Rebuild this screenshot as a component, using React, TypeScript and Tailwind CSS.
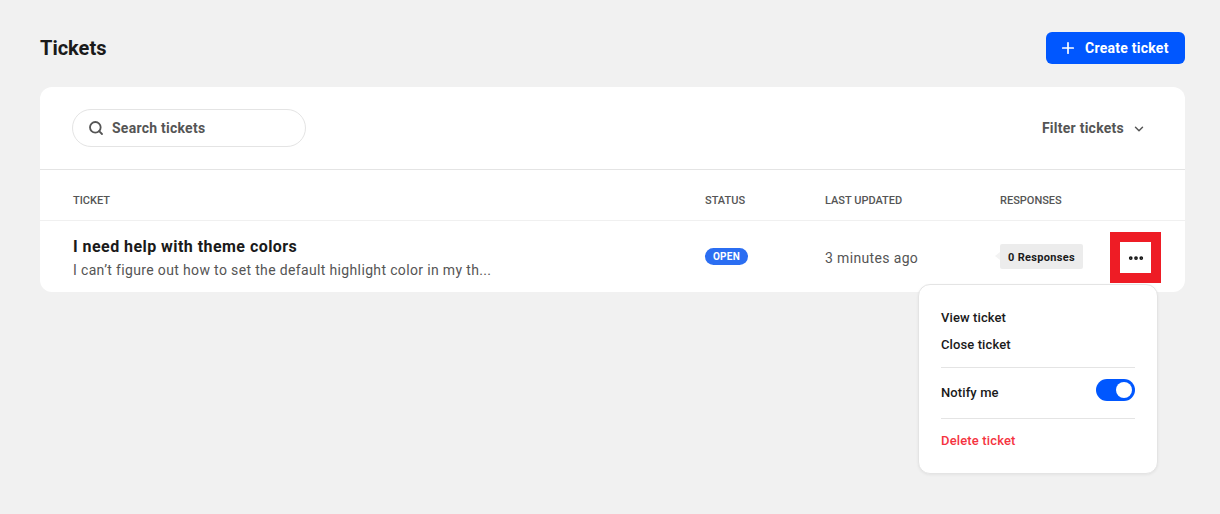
import { ChevronDown, Ellipsis, Plus, Search } from "lucide-react";

const columns = "grid grid-cols-[632px_120px_175px_110px_1fr] pl-[33px]";

function RowMenu() {
  return (
    <div className="absolute left-[878px] top-[197px] w-[240px] h-[190px] rounded-[12px] border border-[#e4e4e4] bg-white px-[22px] pt-[24px] shadow-[0_1px_3px_rgba(0,0,0,0.06)] text-[13px] font-medium tracking-[0.1px] text-[#1a1a1a]">
      <div className="h-[18px] leading-[18px]">View ticket</div>
      <div className="mt-[9px] h-[18px] leading-[18px]">Close ticket</div>
      <div className="mt-[13px] h-px bg-[#e4e4e4]" />
      <div className="flex items-center justify-between h-[50px]">
        <span>Notify me</span>
        <span className="flex items-center justify-end w-[39px] h-[22px] rounded-full bg-[#0057ff] pr-[3px] -mt-[6px]">
          <span className="block w-[16px] h-[16px] rounded-full bg-white" />
        </span>
      </div>
      <div className="h-px bg-[#e4e4e4]" />
      <div className="mt-[13px] h-[18px] leading-[18px] tracking-[0.15px] text-[#f5333f]">Delete ticket</div>
    </div>
  );
}

export default function App() {
  return (
    <div className="min-h-[514px] bg-[#f1f1f1] pl-[40px] pr-[35px] pt-[32px] font-['Roboto',sans-serif] text-[#1a1a1a]">
      <div className="flex items-center justify-between h-[32px]">
        <h1 className="text-[20px] font-bold leading-[32px]">Tickets</h1>
        <button className="flex items-center w-[139px] h-[32px] rounded-[6px] bg-[#0057ff] pl-[13px] text-[14px] font-bold tracking-[0.25px] text-white">
          <Plus size={18} strokeWidth={2.25} />
          <span className="ml-[8px]">Create ticket</span>
        </button>
      </div>

      <div className="relative mt-[23px] h-[205px] rounded-[12px] bg-white">
        <div className="flex items-center justify-between h-[83px] border-b border-[#e4e4e4] pl-[32px] pr-[39px]">
          <div className="flex items-center w-[234px] h-[38px] rounded-full border border-[#e4e4e4] pl-[15px] text-[14px] font-bold text-[#555555]">
            <Search size={16} strokeWidth={2.75} />
            <span className="ml-[8px] tracking-[0.25px]">Search tickets</span>
          </div>
          <div className="flex items-center text-[14px] font-bold text-[#555555]">
            <span className="tracking-[0.25px]">Filter tickets</span>
            <ChevronDown size={14} strokeWidth={2.5} className="ml-[8px] mt-[1px]" />
          </div>
        </div>

        <div className={`${columns} items-center h-[51px] pt-[12px] border-b border-[#f0f0f0] text-[11px] font-medium text-[#555555]`}>
          <span>TICKET</span>
          <span>STATUS</span>
          <span>LAST UPDATED</span>
          <span>RESPONSES</span>
          <span />
        </div>

        <div className={`${columns} h-[71px]`}>
          <div className="pt-[16px]">
            <div className="text-[16px] font-bold leading-[20px] tracking-[0.45px]">I need help with theme colors</div>
            <div className="mt-[5px] text-[14px] leading-[16px] tracking-[0.35px] text-[#555555]">
              I can’t figure out how to set the default highlight color in my th...
            </div>
          </div>
          <div className="pt-[27px]">
            <span className="flex items-center justify-center w-[43px] h-[17px] rounded-full bg-[#2b6ef2] text-[10px] font-bold tracking-[0.3px] text-white">
              OPEN
            </span>
          </div>
          <div className="pt-[28px] text-[14px] leading-[18px] tracking-[0.35px] text-[#555555]">3 minutes ago</div>
          <div className="pt-[23px]">
            <span className="relative flex items-center justify-center w-[83px] h-[25px] pt-[4px] rounded-[2px] bg-[#ececec] text-[11px] font-bold tracking-[0.3px]">
              <span className="absolute -left-[5px] top-[8px] border-y-[4px] border-r-[5px] border-y-transparent border-r-[#f3f3f3]" />
              0 Responses
            </span>
          </div>
          <div className="pt-[11px]">
            <button className="flex items-center justify-center w-[51px] h-[51px] border-[10px] border-[#ee1c25] bg-white text-[#111111]">
              <Ellipsis size={18} strokeWidth={3} />
            </button>
          </div>
        </div>

        <RowMenu />
      </div>
    </div>
  );
}
